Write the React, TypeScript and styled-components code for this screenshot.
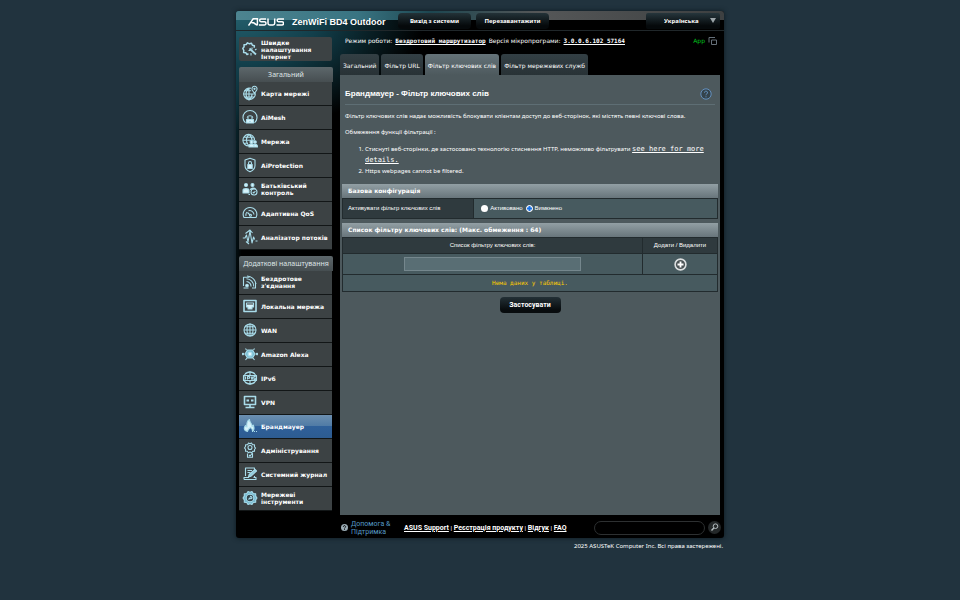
import React from "react";
import styled, { createGlobalStyle, css } from "styled-components";

const verdana = '"DejaVu Sans", Verdana, sans-serif';
const arial = '"Liberation Sans", Arial, sans-serif';
const noto = '"Noto Sans", "Open Sans", sans-serif';
const mono = '"DejaVu Sans Mono", "Courier New", monospace';
const roboto = 'Roboto, "Liberation Sans", sans-serif';

const GlobalStyle = createGlobalStyle`
  *, *::before, *::after { box-sizing: border-box; }
  html { background: #21333e; }
  body { margin: 0; color: #fff; font: 6px/8px ${verdana}; }
  a { color: inherit; }
  svg { flex: none; }
  button, input, select { font: inherit; color: inherit; margin: 0; }
  ul, ol, h1, h2, p { margin: 0; padding: 0; }
`;

const Page = styled.div`
  display: flex;
  flex-direction: column;
  align-items: center;
  padding: 11px 8px;
`;

const Frame = styled.div`
  width: 100%;
  max-width: 488px;
  border-radius: 3px;
  background:
    radial-gradient(ellipse 190px 120px at 0 0, #25616e 0, #123f4b 45%, transparent 100%),
    radial-gradient(ellipse 8px 320px at 0 0, #0e3540, transparent),
    #000;
  box-shadow: 0 0 5px #0d1920;
  overflow: hidden;
`;

const Header = styled.header`
  display: flex;
  align-items: flex-start;
  height: 20px;
  padding: 2px 4px 0 12px;
  border-bottom: 1px solid #20272a;
  background: linear-gradient(90deg, #4d8490 0, #397482 25%, #1d4650 40%, #555758 62%, #3d4041 100%) 0 0 / 100% 9px no-repeat;
`;

const Brand = styled.div`
  display: flex;
  align-items: center;
  gap: 8px;
  width: 150px;
  height: 18px;
  font: 700 9px/18px ${arial};
  white-space: nowrap;
`;

const HeaderButton = styled.button`
  width: 73px;
  height: 16px;
  margin-right: 5px;
  padding: 0;
  border: 0;
  border-radius: 4px;
  background: linear-gradient(#233238, #05090b 80%);
  font: 700 6px/16px ${noto};
`;

const LanguageBox = styled.label`
  position: relative;
  width: 74px;
  margin-left: auto;
`;

const LanguageSelect = styled.select`
  width: 100%;
  height: 16px;
  padding: 0 12px 0 18px;
  border: 0;
  border-radius: 2px;
  appearance: none;
  background: linear-gradient(#26363c, #05090b 80%);
  font: 700 6px/16px ${noto};
`;

const Arrow = styled.svg`
  position: absolute;
  right: 4px;
  top: 5px;
  pointer-events: none;
`;

const Columns = styled.div`
  display: grid;
  grid-template-columns: 94px minmax(0, 1fr);
  column-gap: 7px;
  padding: 0 4px 0 3px;
`;

const Sidebar = styled.nav`
  display: flex;
  flex-direction: column;
  gap: 6px;
  padding-top: 6px;
`;

const MenuTitle = styled.h2`
  height: 15px;
  border-radius: 2px 2px 0 0;
  background: linear-gradient(#5d676b, #464e51);
  color: #dfe5e7;
  font: 400 7px/16px ${noto};
  text-align: center;
  white-space: nowrap;
`;

const MenuList = styled.ul`
  margin: 0 1px 0 0;
  list-style: none;
`;

const MenuLink = styled.a<{ $active?: boolean }>`
  display: grid;
  grid-template-columns: 16px minmax(0, 1fr);
  align-items: center;
  column-gap: 3px;
  height: 24px;
  padding: 0 0 1px 3px;
  border-bottom: 1px solid #121617;
  background: ${(p) => (p.$active ? "linear-gradient(#6c8fb0 0, #4f7aa5 49%, #2f609a 50%, #2d5c91)" : "#3c4244")};
  color: #fff;
  font: 700 6px/7px ${verdana};
  text-decoration: none;
`;

const QuickLink = styled(MenuLink)`
  margin-right: 1px;
  padding-bottom: 0;
  border-radius: 2px;
  border-bottom: 0;
`;

const Main = styled.div`
  min-width: 0;
`;

const InfoBar = styled.div`
  display: flex;
  align-items: center;
  gap: 3px;
  height: 20px;
  padding: 0 3px 0 5px;
  white-space: nowrap;
`;

const InfoLink = styled.a`
  font: 700 6px/8px ${mono};
`;

const AppLink = styled.a`
  display: flex;
  align-items: center;
  gap: 3px;
  margin-left: auto;
  color: #00c81e;
  font: 6px/8px ${verdana};
  text-decoration: none;
`;

const Tabs = styled.nav`
  display: flex;
  gap: 2px;
  height: 24px;
  padding-top: 3px;
`;

const Tab = styled.a<{ $active?: boolean }>`
  padding: 0 3px;
  border-radius: 3px 3px 0 0;
  background: ${(p) => (p.$active ? "linear-gradient(#657379, #4d595d)" : "linear-gradient(#333f44, #283236)")};
  font: 6px/23px ${verdana};
  text-decoration: none;
  white-space: nowrap;
`;

const Panel = styled.main`
  display: flex;
  flex-direction: column;
  min-height: 440px;
  padding: 0 2px;
  background: #4d595d;
  font: 6px/11px ${arial};
`;

const PanelHead = styled.div`
  display: flex;
  align-items: center;
  justify-content: space-between;
  height: 30px;
  margin: 0 3px;
  padding: 8px 3px 0 0;
  border-bottom: 1px solid #5e6e74;
`;

const Title = styled.h1`
  font: 700 8px/16px ${arial};
`;

const IconButton = styled.button`
  display: grid;
  place-items: center;
  padding: 0;
  border: 0;
  background: none;
`;

const Intro = styled.div`
  padding: 6px 0 0 3px;
  font: 6px/11px ${noto};
`;

const Paragraph = styled.p`
  margin-bottom: 5px;
`;

const Notes = styled.ol`
  padding: 1px 0 7px 20px;
`;

const NoteLink = styled.a`
  font: 7px/8px ${mono};
`;

const cell = css`
  border: 1px solid #222b2e;
  padding: 0 5px;
  font-weight: 400;
`;

const Table = styled.table`
  width: 100%;
  margin-bottom: 4px;
  border-collapse: collapse;
  table-layout: fixed;
`;

const Caption = styled.caption`
  height: 14px;
  padding-left: 6px;
  background: linear-gradient(#929fa4, #68757b);
  font: 700 6px/14px ${verdana};
  text-align: left;
`;

const HeadCell = styled.th<{ $width?: string; $left?: boolean }>`
  ${cell}
  width: ${(p) => p.$width ?? "auto"};
  height: ${(p) => (p.$left ? "20px" : "16px")};
  background: #2f3a3e;
  text-align: ${(p) => (p.$left ? "left" : "center")};
`;

const Cell = styled.td<{ $height?: number }>`
  ${cell}
  height: ${(p) => p.$height ?? 20}px;
  background: #475a5f;
`;

const EmptyCell = styled(Cell)`
  color: #fc0;
  font: 6px/8px ${mono};
  text-align: center;
`;

const Options = styled.div`
  display: flex;
  align-items: center;
  gap: 3px;
  padding-left: 2px;
`;

const Option = styled.label`
  display: flex;
  align-items: center;
  gap: 2px;
`;

const Radio = styled.input`
  width: 7px;
  height: 7px;
  border-radius: 50%;
  appearance: none;
  background: #fff;
  &:checked {
    border: 1px solid #fff;
    background: radial-gradient(circle, #1570e8 0 1px, #fff 2px);
    box-shadow: inset 0 0 0 1px #1570e8;
  }
`;

const KeywordInput = styled.input`
  display: block;
  width: 61%;
  height: 14px;
  margin: 0 auto;
  padding: 0 3px;
  border: 1px solid #75878d;
  background: #596e74;
`;

const AddButton = styled(IconButton)`
  margin: 0 auto;
`;

const ApplyButton = styled.button`
  align-self: center;
  width: 61px;
  height: 16px;
  margin-top: 1px;
  padding: 0;
  border: 0;
  border-radius: 4px;
  background: linear-gradient(#233036, #080c0e 80%);
  font: 700 7px/16px ${roboto};
`;

const Footer = styled.footer`
  display: flex;
  align-items: center;
  height: 23px;
  padding: 2px 3px 0 105px;
`;

const HelpLink = styled.a`
  display: flex;
  align-items: center;
  gap: 3px;
  width: 63px;
  color: #569ac7;
  font: 7px/8px ${roboto};
  text-decoration: none;
`;

const FooterLinks = styled.div`
  font: 6px/8px ${arial};
  white-space: nowrap;
  a { font: 700 7px/8px ${roboto}; }
`;

const Search = styled.form`
  display: flex;
  align-items: center;
  gap: 3px;
  margin-left: auto;
`;

const SearchInput = styled.input`
  width: 111px;
  height: 14px;
  padding: 0 6px;
  border: 1px solid #2d3031;
  border-radius: 7px;
  background: #000;
`;

const Copyright = styled.p`
  width: 100%;
  max-width: 488px;
  padding: 4px 1px 0 0;
  font: 6px/8px ${noto};
  text-align: right;
`;

const glyphs: Record<string, React.ReactNode> = {
  wizard: (
    <>
      <path d="M6.5 12.8 5 13.5l-1.2-1.8-2.2-.2.2-2.2L.8 7.5l1.3-1.7L2 3.8l2.2-.3L5.5 1.8l2 1 2-.6.9 2 2 .6-.2 2" strokeWidth="1.5" />
      <path d="m7.5 7.5 6.5 6" strokeWidth="1.8" /><path d="M10 6.5v2M6.5 9.5h2M9 12v2.5M13 9l1.5-1" />
    </>
  ),
  map: (
    <>
      <path d="M9 3.2a5.8 5.8 0 1 0 4.3 5M1 9h12.3M2 5.8h7.2M2.2 12h10M7 3c-4 3-4 9 0 12 2.3-1.5 3.2-4 3-6.5M7 3v12" />
      <path d="M12.5 8.5 10.3 5a2.5 2.5 0 1 1 4.4 0z" fill="#3c4244" /><circle cx="12.5" cy="3.8" r=".6" />
    </>
  ),
  mesh: (
    <>
      <path d="M3.5 13.8a7 7 0 1 1 9 0" />
      <path d="M5 8.5a3.5 3.5 0 0 1 6 0" />
      <path d="M4.5 10.5h7V14h-7z" fill="#d8f3fa" /><path d="M6 8v2.5M10 8v2.5M7 12.5h2" />
    </>
  ),
  network: (
    <>
      <path d="M12.5 7A5.8 5.8 0 1 0 7 13M1 7.2h11.5M2 4.2h9.5M2 10.2h4M7 1.5c-3.5 3-3.5 8 0 11.5M7 1.5c2 1.5 3 3.5 3 5.5" />
      <circle cx="9.5" cy="9" r="1.5" fill="#d8f3fa" /><circle cx="13" cy="9" r="1.3" fill="#d8f3fa" />
      <path d="M7 14v-1.5c0-2 5-2 5 0V14zM12 14v-2.5c3-.5 3.5.5 3.5 2.5z" fill="#d8f3fa" />
    </>
  ),
  shield: (
    <>
      <path d="M8 1.2 13 3v5.5c0 3-2.5 5.2-5 6.3-2.5-1.1-5-3.3-5-6.3V3z" />
      <path d="M5.8 7.5h4.4v4H5.8z" fill="#d8f3fa" /><path d="M6.5 7.5V6a1.5 1.5 0 0 1 3 0v1.5" />
    </>
  ),
  family: (
    <>
      <circle cx="4" cy="4" r="1.5" fill="#d8f3fa" /><circle cx="10.5" cy="4" r="1.5" fill="#d8f3fa" />
      <path d="M1 12V9.5c0-2.5 6-2.5 6 0V12zM8.5 9c0-2.5 4-2.5 5-1" fill="#d8f3fa" />
      <circle cx="12" cy="11" r="3" fill="#3c4244" /><path d="m10.8 11 1 1 1.6-2M6.5 13.5H8" />
    </>
  ),
  gauge: (
    <>
      <path d="M2 12.5A6.8 6.8 0 1 1 14 12.5z" /><path d="M4 11a4.3 4.3 0 0 1 1-4M6.5 5.7A4.5 4.5 0 0 1 12 9.5M8 10 5.5 7.5" /><circle cx="8.5" cy="10.3" r="1" />
    </>
  ),
  pulse: <path d="M.8 9H3l1.500-3L6 13 8 2l2 12 1.600-6 1 2.500M13.500 12h2M3.500 4.500 8 1l2.500 3M4 12.500 7 15" />,
  wifi: (
    <>
      <path d="M1.5 12V3.2h6M1.5 14h5M13.5 9v5H10" />
      <circle cx="5" cy="11.5" r="1.3" fill="#d8f3fa" /><path d="M4.5 7.5a4.7 4.7 0 0 1 4.5 5M4.5 4.8a7.4 7.4 0 0 1 7.2 7.7M5 2a10 10 0 0 1 9 8" />
    </>
  ),
  lan: (
    <>
      <path d="M2 2.5h12v11H2z" strokeWidth="1.6" />
      <path d="M4.5 5h7v4H10v2H6V9H4.5z" fill="#d8f3fa" /><path d="M6 5v2M8 5v2M10 5v2" stroke="#3c4244" />
    </>
  ),
  globe: (
    <>
      <circle cx="8" cy="8" r="6" /><ellipse cx="8" cy="8" rx="3" ry="6" /><path d="M8 2v12M2 8h12M3 4.8h10M3 11.2h10" />
    </>
  ),
  alexa: (
    <>
      <path d="M5.5 4h5L13 8l-2.5 4h-5L3 8z" fill="#79bcd2" /><circle cx="8" cy="8" r="2" fill="#e5f9ff" />
      <path d="M4.5 4 3.5 2.5M11.5 4l1-1.5M5 12l-1.5 2M11 12l1.5 2" />
      <circle cx="1" cy="8" r=".8" /><circle cx="15" cy="8" r=".8" />
    </>
  ),
  ipv6: (
    <>
      <circle cx="8" cy="8" r="6.3" /><path d="M3 3.5 8 2l5 1.5M3 12.5 8 14l5-1.5M8 2v3M8 11v3M1.5 5.5h13v5h-13z" />
      <path d="M3.5 6.5v3M5.5 9.5v-3h2v1.7h-2M9 6.5l1 3 1-3M13.5 6.5H12v3h1.3V8" />
    </>
  ),
  vpn: (
    <>
      <path d="M2.5 2.5h11v8h-11zM8 10.5V13M3.5 13.5h9" strokeWidth="1.6" /><path d="M4.5 6.5H7M9 6.5h2.5" strokeWidth="2" />
    </>
  ),
  flame: (
    <>
      <path d="M5.5 13.5c-4-1-4-4-1.8-6C3.8 9 4.5 9 5 9c-.5-3 0-6 2.5-7.5-.5 2.5 3 4 2.5 7l1.3-1.3c1 2 1 4.5-.8 6.3.5-2-1-3-2-4-1.5 1-2.8 2-3 4z" fill="#d8f3fa" />
      <path d="M12 13.5h1M14 13.5h1" />
    </>
  ),
  admin: (
    <>
      <path d="m6.5 1 1.5.8L9.5 1l1 1.7 2 .1v2l1 1.2-1 1.5v1.7l-1.7.2-1.3 1.4L8 10l-1.7.7-1-1.5-1.8-.1.1-1.8L2.5 6l1-1.5.1-1.7 2-.1z" />
      <circle cx="8" cy="5.5" r="2" /><path d="M5.5 11.5v3.8h5v-4M7 13l1 1 2.5-3" />
    </>
  ),
  log: (
    <>
      <path d="M3.5 10V2h9v3M5.5 4.5H10M5.5 6.5h3M2 13.5h12v-2h-2.5M2 13.5v-2h5M12.5 10v2" /><path d="m6.5 11 .7-2.5L13 3.5 14.5 5l-5.7 5.3z" fill="#8fc9da" />
    </>
  ),
  tools: (
    <>
      <path d="m6 1.5 2 .8 2-.8 1.3 2 2.4.2v2.4L15 8l-1.3 2v2.3l-2.4.2-1.3 2-2-.8-2 .8-1.3-2-2.4-.2V10L1 8l1.3-1.9V3.7l2.4-.2z" fill="#79bcd2" />
      <circle cx="8" cy="8" r="3.8" fill="#34464d" /><path d="m6.5 9.5 2-2M8 6.5A1.5 1.5 0 0 1 10 8L8.5 9" />
    </>
  ),
};

function Glyph({ name }: { name: string }) {
  return (
    <svg width="16" height="16" viewBox="0 0 16 16" fill="none" stroke="#a9dcea" strokeWidth="1.1" strokeLinejoin="round" aria-hidden="true">
      {glyphs[name]}
    </svg>
  );
}

const generalMenu = [
  ["map", "Карта мережі"],
  ["mesh", "AiMesh"],
  ["network", "Мережа"],
  ["shield", "AiProtection"],
  ["family", "Батьківський контроль"],
  ["gauge", "Адаптивна QoS"],
  ["pulse", "Аналізатор потоків"],
];

const advancedMenu = [
  ["wifi", "Бездротове з'єднання"],
  ["lan", "Локальна мережа"],
  ["globe", "WAN"],
  ["alexa", "Amazon Alexa"],
  ["ipv6", "IPv6"],
  ["vpn", "VPN"],
  ["flame", "Брандмауер"],
  ["admin", "Адміністрування"],
  ["log", "Системний журнал"],
  ["tools", "Мережеві інструменти"],
];

const tabs = ["Загальний", "Фільтр URL", "Фільтр ключових слів", "Фільтр мережевих служб"];

function Menu({ title, items }: { title: string; items: string[][] }) {
  return (
    <section>
      <MenuTitle>{title}</MenuTitle>
      <MenuList>
        {items.map(([icon, label]) => (
          <li key={label}>
            <MenuLink href="#" $active={icon === "flame"}>
              <Glyph name={icon} />
              <span>{label}</span>
            </MenuLink>
          </li>
        ))}
      </MenuList>
    </section>
  );
}

export default function App() {
  return (
    <Page>
      <GlobalStyle />
      <Frame>
        <Header>
          <Brand>
            <svg width="36" height="8" viewBox="0 0 36 8" fill="none" stroke="#fff" strokeWidth="1.5" role="img" aria-label="ASUS">
              <path d="M.5 7.5 5.2.8h4.2v6.7M3.5 4.8h2.2l3.2 2.4M18 .9h-5c-1.8 0-1.8 2.8 0 2.8h3.5c2 0 2 3.3 0 3.3H11M20 .5v4.8c0 1 .6 1.7 1.7 1.7H25c1 0 1.7-.7 1.7-1.7V.5M36 .9h-5.5c-1.8 0-1.8 2.8 0 2.8H34c2 0 2 3.3 0 3.3h-5.5" />
            </svg>
            <span>ZenWiFi BD4 Outdoor</span>
          </Brand>
          <HeaderButton type="button">Вихід з системи</HeaderButton>
          <HeaderButton type="button">Перезавантажити</HeaderButton>
          <LanguageBox>
            <LanguageSelect aria-label="Мова" defaultValue="uk">
              <option value="uk">Українська</option>
            </LanguageSelect>
            <Arrow width="6" height="5" viewBox="0 0 6 5" aria-hidden="true">
              <path d="M0 0h6L3 5z" fill="#9ba4a8" />
            </Arrow>
          </LanguageBox>
        </Header>
        <Columns>
          <Sidebar>
            <QuickLink href="#">
              <Glyph name="wizard" />
              <span>Швидке налаштування Інтернет</span>
            </QuickLink>
            <Menu title="Загальний" items={generalMenu} />
            <Menu title="Додаткові налаштування" items={advancedMenu} />
          </Sidebar>
          <Main>
            <InfoBar>
              <span>Режим роботи:</span>
              <InfoLink href="#">Бездротовий маршрутизатор</InfoLink>
              <span>Версія мікропрограми:</span>
              <InfoLink href="#">3.0.0.6.102_57164</InfoLink>
              <AppLink href="#">
                App
                <svg width="9" height="9" viewBox="0 0 9 9" fill="none" stroke="#66707a" aria-hidden="true">
                  <path d="M1 5.5v-5h6M3.5 3h5v4.5h-5z" />
                </svg>
              </AppLink>
            </InfoBar>
            <Tabs>
              {tabs.map((tab, i) => (
                <Tab key={tab} href="#" $active={i === 2}>{tab}</Tab>
              ))}
            </Tabs>
            <Panel>
              <PanelHead>
                <Title>Брандмауер - Фільтр ключових слів</Title>
                <IconButton type="button" aria-label="Довідка">
                  <svg width="12" height="12" viewBox="0 0 12 12" fill="none" stroke="#6490bd" aria-hidden="true">
                    <circle cx="6" cy="6" r="5.2" fill="#34434c" />
                    <path d="M4.5 4.7a1.5 1.5 0 1 1 2.3 1.2C6.2 6.3 6 6.5 6 7.3M6 8.3v1" />
                  </svg>
                </IconButton>
              </PanelHead>
              <Intro>
                <Paragraph>Фільтр ключових слів надає можливість блокувати клієнтам доступ до веб-сторінок, які містять певні ключові слова.</Paragraph>
                <Paragraph>Обмеження функції фільтрації :</Paragraph>
                <Notes>
                  <li>
                    Стиснуті веб-сторінки, де застосовано технологію стиснення HTTP, неможливо фільтрувати{" "}
                    <NoteLink href="#">see here for more details.</NoteLink>
                  </li>
                  <li>Https webpages cannot be filtered.</li>
                </Notes>
              </Intro>
              <Table>
                <Caption>Базова конфігурація</Caption>
                <tbody>
                  <tr>
                    <HeadCell scope="row" $width="35%" $left>Активувати фільтр ключових слів</HeadCell>
                    <Cell>
                      <Options>
                        <Option><Radio type="radio" name="filter" />Активовано</Option>
                        <Option><Radio type="radio" name="filter" defaultChecked />Вимкнено</Option>
                      </Options>
                    </Cell>
                  </tr>
                </tbody>
              </Table>
              <Table>
                <Caption>Список фільтру ключових слів: (Макс. обмеження : 64)</Caption>
                <thead>
                  <tr>
                    <HeadCell scope="col" $width="80%">Список фільтру ключових слів:</HeadCell>
                    <HeadCell scope="col">Додати / Видалити</HeadCell>
                  </tr>
                </thead>
                <tbody>
                  <tr>
                    <Cell $height={21}><KeywordInput aria-label="Список фільтру ключових слів" /></Cell>
                    <Cell $height={21}>
                      <AddButton type="button" aria-label="Додати">
                        <svg width="13" height="13" viewBox="0 0 13 13" fill="none" aria-hidden="true">
                          <circle cx="6.5" cy="6.5" r="5.4" fill="#4b5355" stroke="#dcdfe0" strokeWidth="1.6" />
                          <path d="M6.5 3.5v6M3.5 6.5h6" stroke="#fff" strokeWidth="1.8" />
                        </svg>
                      </AddButton>
                    </Cell>
                  </tr>
                  <tr>
                    <EmptyCell colSpan={2} $height={17}>Нема даних у таблиці.</EmptyCell>
                  </tr>
                </tbody>
              </Table>
              <ApplyButton type="button">Застосувати</ApplyButton>
            </Panel>
          </Main>
        </Columns>
        <Footer>
          <HelpLink href="#">
            <svg width="7" height="7" viewBox="0 0 8 8" aria-hidden="true">
              <circle cx="4" cy="4" r="4" fill="#9aabb4" />
              <path d="M2.7 3.2a1.3 1.3 0 1 1 2 1C4 4.6 4 4.8 4 5.2M4 5.8v.9" fill="none" stroke="#000" />
            </svg>
            <span>Допомога & Підтримка</span>
          </HelpLink>
          <FooterLinks>
            <a href="#">ASUS Support</a> | <a href="#">Реєстрація продукту</a> | <a href="#">Відгук</a> | <a href="#">FAQ</a>
          </FooterLinks>
          <Search>
            <SearchInput type="text" aria-label="FAQ" />
            <IconButton type="button" aria-label="Пошук">
              <svg width="13" height="13" viewBox="0 0 13 13" fill="none" aria-hidden="true">
                <circle cx="6.5" cy="6.5" r="6.5" fill="#242829" />
                <circle cx="7.5" cy="5.2" r="2.3" stroke="#b4bdc0" />
                <path d="M5.8 7 3.5 9.5" stroke="#b4bdc0" strokeWidth="1.4" />
              </svg>
            </IconButton>
          </Search>
        </Footer>
      </Frame>
      <Copyright>2025 ASUSTeK Computer Inc. Всі права застережені.</Copyright>
    </Page>
  );
}
